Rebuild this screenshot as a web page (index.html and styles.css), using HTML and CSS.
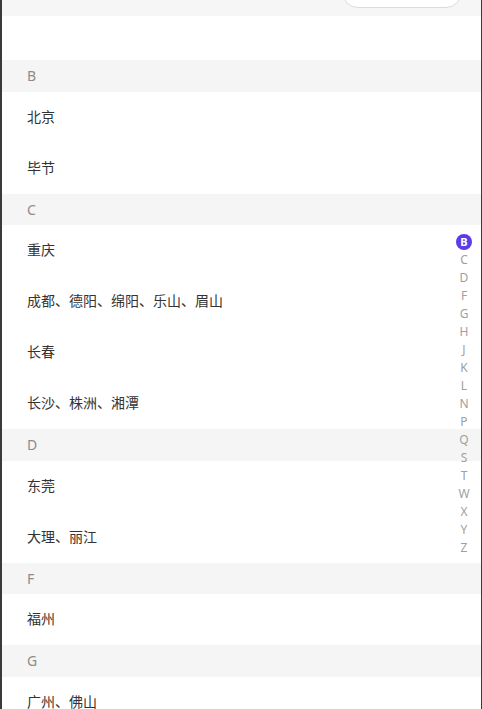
FILE: index.html
```html
<!DOCTYPE html>
<html lang="zh">
<head>
    <meta charset="UTF-8">
    <meta name="viewport" content="width=device-width, initial-scale=1.0">
    <title>城市选择</title>
    <link rel="stylesheet" href="styles.css">
</head>
<body>
    <div class="page">
        <div class="search-bar">
            <div class="search-pill"></div>
        </div>
        <div class="spacer"></div>

        <div class="city-list">
            <div class="group-title">B</div>
            <div class="city">北京</div>
            <div class="city">毕节</div>

            <div class="group-title">C</div>
            <div class="city">重庆</div>
            <div class="city">成都、德阳、绵阳、乐山、眉山</div>
            <div class="city">长春</div>
            <div class="city">长沙、株洲、湘潭</div>

            <div class="group-title">D</div>
            <div class="city">东莞</div>
            <div class="city">大理、丽江</div>

            <div class="group-title">F</div>
            <div class="city">福州</div>

            <div class="group-title">G</div>
            <div class="city">广州、佛山</div>
        </div>

        <!-- 右侧字母索引 -->
        <ul class="index-bar">
            <li class="active">B</li>
            <li>C</li>
            <li>D</li>
            <li>F</li>
            <li>G</li>
            <li>H</li>
            <li>J</li>
            <li>K</li>
            <li>L</li>
            <li>N</li>
            <li>P</li>
            <li>Q</li>
            <li>S</li>
            <li>T</li>
            <li>W</li>
            <li>X</li>
            <li>Y</li>
            <li>Z</li>
        </ul>
    </div>
</body>
</html>
```

FILE: styles.css
```css
body {
    margin: 0;
    padding: 0;
    font-family: 'Noto Sans', 'Noto Sans CJK SC', sans-serif;
    background: #fff;
    overflow: hidden;
}

.page {
    position: relative;
    height: 709px;
    border-left: 2px solid #3a3a3a;
    border-right: 1px solid #3a3a3a;
    overflow: hidden;
}

/* 顶部搜索栏（已滚出一部分） */
.search-bar {
    height: 16px;
    background: #f6f6f6;
    display: flex;
    justify-content: flex-end;
    padding-right: 19px;
}

.search-pill {
    width: 118px;
    height: 30px;
    margin-top: -24px;
    background: #fff;
    border: 1px solid #dcdcdc;
    border-radius: 16px;
}

.spacer {
    height: 44px;
}

.group-title {
    height: 31.5px;
    line-height: 31.5px;
    padding-left: 25px;
    background: #f5f5f5;
    color: #8c8c8c;
    font-size: 14px;
}

.city {
    height: 51px;
    line-height: 50px;
    padding-left: 25px;
    color: #333;
    font-size: 14px;
}

/* 字母索引 */
.index-bar {
    position: absolute;
    top: 233px;
    right: 8px;
    margin: 0;
    padding: 0;
    list-style: none;
    width: 18px;
}

.index-bar li {
    height: 18px;
    line-height: 18px;
    text-align: center;
    font-size: 12px;
    color: #a0a0a0;
}

.index-bar li.active {
    width: 16px;
    height: 16px;
    line-height: 16px;
    margin: 1px auto;
    border-radius: 50%;
    background: #5b3ce6;
    color: #fff;
    font-weight: bold;
    font-size: 11px;
}
```
